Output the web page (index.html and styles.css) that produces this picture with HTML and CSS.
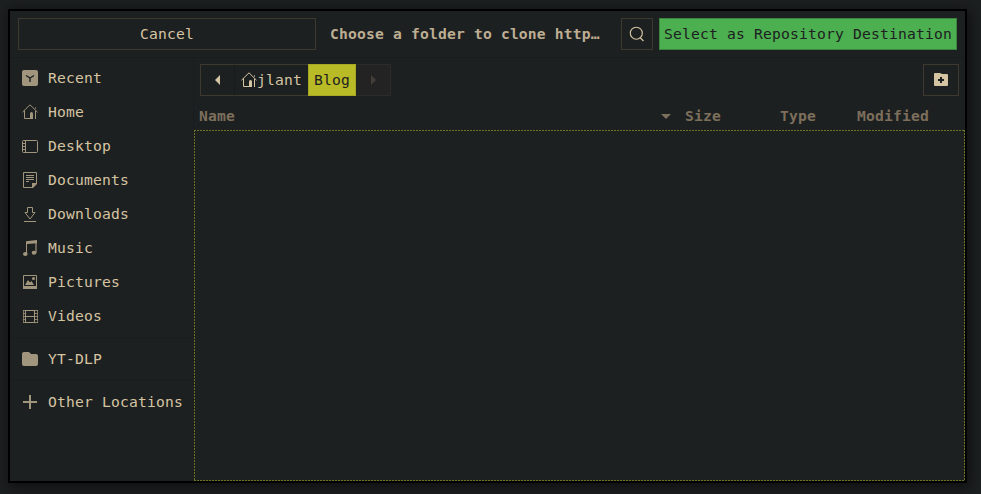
FILE: index.html
```html
<!DOCTYPE html>
<html lang="en">
<head>
<meta charset="utf-8">
<title>Choose a folder</title>
<link rel="stylesheet" href="styles.css">
</head>
<body>
<svg class="defs" width="0" height="0">
  <symbol id="house" viewBox="0 0 16 16">
    <path fill="none" stroke="currentColor" d="M.5 8.200 8 .8l7.500 7.400M2.500 6.500v8h6M13.500 7V15"/>
    <path fill="none" stroke="currentColor" stroke-opacity=".6" d="M13.500 3v2"/>
    <path fill="currentColor" d="M8 15V9.500Q8 8 9.500 8T11 9.500V15z"/>
  </symbol>
</svg>
<main class="dialog">
  <header class="headerbar">
    <button class="btn cancel">Cancel</button>
    <h1 class="title">Choose a folder to clone http…</h1>
    <button class="btn search" aria-label="Search"><svg width="16" height="16" viewBox="0 0 16 16" fill="none" stroke="currentColor" stroke-width="1.150"><circle cx="7.300" cy="7.200" r="6"/><path d="m11 11.500 3.500 3.500"/></svg></button>
    <button class="btn select">Select as Repository Destination</button>
  </header>
  <div class="content">
    <nav class="sidebar">
      <a class="place"><svg class="icon" viewBox="0 0 16 16"><rect width="16" height="16" rx="2" fill="currentColor"/><path d="M4 5.500 8 8l4-2.500M8 8v4" fill="none" stroke="#1d2021" stroke-width="1.400"/></svg>Recent</a>
      <a class="place"><svg class="icon" viewBox="0 0 16 16"><use href="#house"/></svg>Home</a>
      <a class="place"><svg class="icon" viewBox="0 0 16 16" fill="none" stroke="currentColor"><rect x=".5" y="2.500" width="15" height="12" rx="1"/><path d="M3.500 3v11M1 5.500h2M1 8.500h2M1 11.500h2"/></svg>Desktop</a>
      <a class="place"><svg class="icon" viewBox="0 0 16 16"><path d="M10.500 15.500h-9V.5h13v11" fill="none" stroke="currentColor"/><path d="M4 3.500h8M4 5.500h8M4 7.500h8M4 9.500h3" stroke="currentColor"/><path d="M10 11h5v1l-4 4h-1z" fill="currentColor"/></svg>Documents</a>
      <a class="place"><svg class="icon" viewBox="0 0 16 16" fill="none" stroke="currentColor"><path d="M5.500 1.500h5v5h2.500L8 13 3 6.500h2.500zM2 15.500h12"/></svg>Downloads</a>
      <a class="place"><svg class="icon" viewBox="0 0 16 16" fill="currentColor"><path d="M4 1.200 15 0v3.200L5 4v10H4z"/><path d="M13 3h2v10h-2z" fill-opacity=".6"/><ellipse cx="3.300" cy="14" rx="2.300" ry="2"/><ellipse cx="12" cy="12.800" rx="2.300" ry="2"/></svg>Music</a>
      <a class="place"><svg class="icon" viewBox="0 0 16 16"><path d="M1.500 1.500h13v13h-13z" fill="none" stroke="currentColor"/><path d="M1 12h14v3H1zM3 11l3-5 2 2.500 1.500-1.500 2.500 4z" fill="currentColor"/><circle cx="11.500" cy="4.500" r="1.500" fill="currentColor"/></svg>Pictures</a>
      <a class="place"><svg class="icon" viewBox="0 0 16 16" fill="none" stroke="currentColor"><path d="M3.500 2v13M12.500 2v13M3 2.500h10M3 8.500h10M3 14.500h10"/><path d="M1.500 2v13M15.500 2v13" stroke-opacity=".7"/><path d="M1 2.500h2M1 5.500h2M1 8.500h2M1 11.500h2M1 14.500h2M13 2.500h3M13 5.500h3M13 8.500h3M13 11.500h3M13 14.500h3" stroke-opacity=".8"/></svg>Videos</a>
      <hr class="rule">
      <a class="place"><svg class="icon" viewBox="0 0 16 16" fill="currentColor"><path d="M0 3q0-2 2-2h5l2 2h5q2 0 2 2v8q0 2-2 2H2q-2 0-2-2z"/></svg>YT-DLP</a>
      <hr class="rule">
      <a class="place"><svg class="icon" viewBox="0 0 16 16" fill="currentColor"><path d="M7 1h2v6h6v2H9v6H7V9H1V7h6z"/></svg>Other Locations</a>
    </nav>
    <section class="browser">
      <div class="toolbar">
        <div class="pathbar">
          <button class="crumb back" aria-label="Back"><svg width="16" height="16" viewBox="0 0 16 16" fill="currentColor"><path d="M10 3v10L5 8z"/></svg></button>
          <button class="crumb home"><svg width="16" height="16" viewBox="0 0 16 16"><use href="#house"/></svg><span>jlant</span></button>
          <button class="crumb current"><span>Blog</span></button>
          <button class="crumb forward" aria-label="Forward"><svg width="16" height="16" viewBox="0 0 16 16" fill="currentColor"><path d="M6 3v10l5-5z"/></svg></button>
        </div>
        <button class="btn new-folder" aria-label="New folder"><svg width="16" height="16" viewBox="0 0 16 16"><path d="M1 2q0-1 1-1h5l2 1h5q1 0 1 1v10q0 1-1 1H2q-1 0-1-1z" fill="currentColor"/><path d="M8 5v6M5 8h6" stroke="#1d2021" stroke-width="2"/></svg></button>
      </div>
      <div class="columns">
        <span>Name</span>
        <svg class="sort" width="10" height="5" viewBox="0 0 10 5" fill="currentColor"><path d="M0 0h10L5 5z"/></svg>
        <span>Size</span><span>Type</span><span>Modified</span>
      </div>
      <div class="files"></div>
    </section>
  </div>
</main>
</body>
</html>
```
FILE: styles.css
```css
* { box-sizing: border-box; }

body {
  margin: 0;
  height: 494px;
  padding: 9px 14px 11px 8px;
  overflow: hidden;
  background: #1d2021;
  color: #d5c4a1;
  font: 14.667px/20px "DejaVu Sans Mono", monospace;
  letter-spacing: 0.170px;
}

.defs { position: absolute; }
svg { display: block; flex: none; }

.dialog {
  display: flex;
  flex-direction: column;
  height: 474px;
  border: 2px solid #000;
  background: #1d2021;
  box-shadow: 2px 3px 12px 2px rgba(0, 0, 0, .5);
}

.headerbar {
  display: flex;
  height: 47px;
  padding: 7px 8px;
  border-bottom: 1px solid #191c1d;
}

button {
  display: flex;
  align-items: center;
  justify-content: center;
  margin: 0;
  padding: 0;
  border: 1px solid #3d392f;
  background: none;
  color: inherit;
  font: inherit;
  letter-spacing: inherit;
  white-space: nowrap;
}

.btn { height: 32px; }
.cancel { width: 298px; }
.title {
  width: 270px;
  margin: 6px 21px 0 14px;
  font-size: inherit;
  line-height: 20px;
  white-space: nowrap;
  color: #bdae93;
}
.search { width: 32px; margin-right: 6px; }
.select {
  width: 298px;
  border-color: #3c8541;
  background: #4caf50;
  color: #1d2021;
}

.content { display: flex; flex: 1; min-height: 0; }

.sidebar {
  width: 184px;
  padding-top: 3px;
  border-right: 1px solid #1a1d1e;
}
.place {
  display: flex;
  align-items: center;
  gap: 10px;
  height: 34px;
  padding-left: 12px;
  white-space: nowrap;
}
.icon { width: 16px; height: 16px; color: #a1967d; }
.rule {
  height: 1px;
  margin: 4px 0;
  border: 0;
  background: #1a1d1e;
}

.browser { display: flex; flex: 1; flex-direction: column; }
.toolbar {
  display: flex;
  justify-content: space-between;
  padding: 6px 6px 0;
}
.pathbar { display: flex; height: 32px; }
.crumb { height: 32px; }
.back { width: 35px; border-right-color: #191c1d; }
.home { width: 73px; border-width: 1px 0; }
.current {
  width: 48px;
  border-color: #a7a724;
  background: #b8bb26;
  color: #1d2021;
}
.forward {
  width: 35px;
  border-color: #2d2b28;
  border-left: 0;
  background: #222322;
  color: #423f39;
}
.new-folder { width: 36px; }

.columns {
  display: grid;
  grid-template-columns: 462px 24px 95px 77px 1fr;
  align-items: center;
  height: 34px;
  padding: 6px 0 0 5px;
  color: #7c6f5c;
  font-weight: bold;
}

.files {
  flex: 1;
  background:
    repeating-linear-gradient(90deg, #6f7122 0 2px, transparent 2px 3px) top / 100% 1px no-repeat,
    repeating-linear-gradient(90deg, #6f7122 0 2px, transparent 2px 3px) bottom / 100% 1px no-repeat,
    repeating-linear-gradient(#6f7122 0 2px, transparent 2px 3px) left / 1px 100% no-repeat,
    repeating-linear-gradient(#6f7122 0 2px, transparent 2px 3px) right / 1px 100% no-repeat;
}
```
